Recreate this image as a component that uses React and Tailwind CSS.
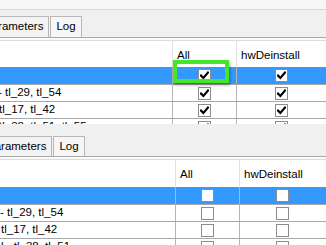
import React from "react";

function CheckIcon() {
  return (
    <svg width="9" height="9" viewBox="0 0 9 9" className="block">
      <path d="M1 4.6 L3.4 7 L8 1.6" fill="none" stroke="#000" strokeWidth="2.2" strokeLinecap="square" />
    </svg>
  );
}

function Box({ checked }) {
  return (
    <div className="w-[13px] h-[13px] border border-[#8c8c8c] bg-white flex items-center justify-center">
      {checked && <CheckIcon />}
    </div>
  );
}

function Row({ cls, text, textShift, leftW, allW, checked }) {
  return (
    <div className={"flex shrink-0 border-b border-[#a8a8a8] " + cls}>
      <div className="overflow-hidden whitespace-nowrap flex items-center" style={{ width: leftW }}>
        <span style={{ marginLeft: textShift }}>{text}</span>
      </div>
      <div className="border-l border-[#b4b4b4] flex items-center justify-center" style={{ width: allW }}>
        <Box checked={checked} />
      </div>
      <div className="border-l border-[#b4b4b4] flex-1 flex items-center justify-center pr-[1px]">
        <Box checked={checked} />
      </div>
    </div>
  );
}

function Tabs({ h, tabShift }) {
  return (
    <div className="flex shrink-0 bg-[#f0f0f0]" style={{ height: h }}>
      <div
        className="flex items-center border border-b-0 border-[#b8b8b8] bg-[#f3f3f3] pl-[5px] pr-[5px] whitespace-nowrap"
        style={{ marginLeft: tabShift }}
      >
        Parameters
      </div>
      <div className="ml-[1px] flex items-center border border-b-0 border-[#b8b8b8] bg-[#f6f6f6] px-[5px]">
        Log
      </div>
    </div>
  );
}

function Panel({ top, checked, height, leftW, allW, tabShift, textShift, headerH, headerPt, topBlock, partial }) {
  return (
    <div className="relative flex flex-col overflow-hidden shrink-0" style={{ height }}>
      {topBlock}
      <Tabs h={top.tabH} tabShift={tabShift} />
      <div className="h-px bg-[#a9a9a9] shrink-0" />
      <div className="h-[2px] bg-[#fafafa] shrink-0" />
      <div className="h-px bg-[#dcdcdc] shrink-0" />
      <div className="flex shrink-0 bg-white" style={{ height: headerH, paddingTop: 0 }}>
        <div style={{ width: leftW }} />
        <div className="border-l border-[#e2e2e2] flex items-center pl-[4px]" style={{ width: allW, paddingTop: headerPt }}>
          All
        </div>
        <div className="border-l border-[#e2e2e2] flex-1 flex items-center pl-[4px]" style={{ paddingTop: headerPt }}>
          hwDeinstall
        </div>
      </div>
      <Row cls="h-[18px] bg-[#3399ff]" text="" textShift={0} leftW={leftW} allW={allW} checked={checked} />
      <Row cls="h-[17px] bg-white" text="- tl_29, tl_54" textShift={textShift - 2} leftW={leftW} allW={allW} checked={checked} />
      <Row cls="h-[17px] bg-white" text="tl_17, tl_42" textShift={textShift - 1} leftW={leftW} allW={allW} checked={checked} />
      <Row cls="h-[17px] bg-white" text={partial} textShift={textShift - 1} leftW={leftW} allW={allW} checked={checked} />
    </div>
  );
}

export default function App() {
  return (
    <div className="w-[326px] h-[245px] overflow-hidden bg-white text-black text-[11.5px] leading-none font-['Liberation_Sans',Arial,sans-serif] flex flex-col">
      <div className="relative">
        <Panel
          top={{ tabH: 21 }}
          checked={true}
          height={124}
          leftW={172}
          allW={64}
          tabShift={-22}
          textShift={0}
          headerH={26}
          headerPt={4}
          partial="tl_38, tl_51, tl_55"
          topBlock={
            <>
              <div className="h-[9px] bg-[#f7f7f7] shrink-0" />
              <div className="h-px bg-[#d6d6d6] shrink-0" />
              <div className="h-[6px] bg-[#f0f0f0] shrink-0" />
            </>
          }
        />
        <div className="absolute left-[173px] top-[60px] w-[56px] h-[23px] border-4 border-[#45e52b] shadow-[1px_2px_3px_rgba(0,0,0,0.35)]" />
      </div>
      <Panel
        top={{ tabH: 20 }}
        checked={false}
        height={121}
        leftW={175}
        allW={64}
        tabShift={-19}
        textShift={2}
        headerH={27}
        headerPt={2}
        partial="l - tl_38, tl_51"
        topBlock={<div className="h-[12px] bg-[#f0f0f0] shrink-0" />}
      />
    </div>
  );
}
